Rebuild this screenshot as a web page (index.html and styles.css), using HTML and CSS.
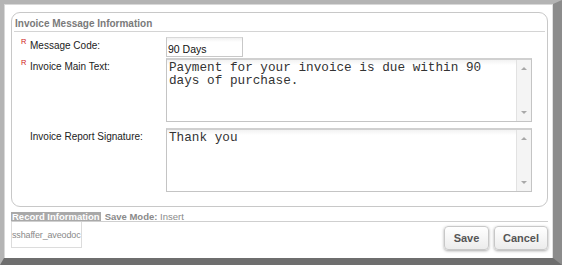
FILE: index.html
```html
<!DOCTYPE html>
<html>
<head>
<meta charset="utf-8">
<link rel="stylesheet" href="styles.css">
</head>
<body>
<div class="window">
  <div class="inner">
    <fieldset class="group">
      <div class="legend">Invoice Message Information</div>
      <div class="rows">
        <div class="row row-code">
          <div class="label"><span class="req">R</span>Message Code:</div>
          <div class="input">90 Days</div>
        </div>
        <div class="row">
          <div class="label"><span class="req">R</span>Invoice Main Text:</div>
          <div class="textarea">
            <div class="ta-text">Payment for your invoice is due within 90 days of purchase.</div>
            <div class="scroll"><span class="up"></span><span class="down"></span></div>
          </div>
        </div>
        <div class="row row-sig">
          <div class="label"><span class="req blank"></span>Invoice Report Signature:</div>
          <div class="textarea">
            <div class="ta-text">Thank you</div>
            <div class="scroll"><span class="up"></span><span class="down"></span></div>
          </div>
        </div>
      </div>
    </fieldset>
    <div class="record">
      <div class="record-bar">
        <span class="tab">Record Information</span>
        <span class="mode"><b>Save Mode:</b> Insert</span>
      </div>
      <div class="record-body">
        <div class="user">sshaffer_aveodoc</div>
        <div class="buttons">
          <button class="btn btn-save">Save</button>
          <button class="btn btn-cancel">Cancel</button>
        </div>
      </div>
    </div>
  </div>
</div>
</body>
</html>
```
FILE: styles.css
```css
* { box-sizing: border-box; }
html, body { margin: 0; padding: 0; background: #fff; }
body { width: 562px; height: 265px; overflow: hidden; font-family: "Liberation Sans", Arial, sans-serif; }
.window {
  width: 562px; height: 265px;
  border-top: 4px solid #b4b4b4;
  border-left: 4px solid #b4b4b4;
  border-right: 9px solid #8c8c8c;
  border-bottom: 7px solid #6e6e6e;
  background: #fff;
  position: relative;
}
.window::before {
  content: ""; position: absolute; left: 0; right: 0; top: 0; bottom: 0;
  border-left: 1px solid #d8d8d8; border-top: 1px solid #d8d8d8; border-right: 1px solid #e0e0e0;
  pointer-events: none;
}
.inner { padding: 8px 0 0 7px; width: 549px; }
.group {
  margin: 0; padding: 0;
  width: 537px; height: 195px;
  border: 1px solid #c8c8c8;
  border-radius: 9px;
  min-width: 0;
}
.legend {
  margin: 0 2px 0 2px;
  height: 19px;
  padding: 5px 0 0 1px;
  border-bottom: 1px solid #d4d4d4;
  font-size: 10px; font-weight: bold; color: #7a7a7a;
  line-height: 12px;
}
.rows { padding: 5px 0 0 9px; }
.row { display: flex; }
.row-code { height: 21px; }
.row-sig { margin-top: 6px; }
.label {
  width: 145px; font-size: 10px; color: #222; padding-top: 3px; line-height: 12px; display: flex;
}
.req { color: #d02020; font-size: 7.5px; line-height: 8px; width: 9px; display: inline-block; margin-top: -2px; }
.input {
  width: 77px; height: 20px;
  border: 1px solid #c8c8c8; border-top-color: #d8d8d8;
  font-size: 10.5px; color: #111; padding: 5px 0 0 1px; line-height: 12px;
  background: linear-gradient(#f0f0f0, #fff 4px);
}
.textarea {
  width: 366px; height: 64px; display: flex;
  border: 1px solid #c4c4c4; border-top: 2px solid #d0d0d0;
  background: linear-gradient(#f2f2f2, #fff 5px);
}
.ta-text {
  flex: 1; font-family: "Liberation Mono", "Courier New", monospace; font-size: 12.7px; line-height: 13px;
  color: #333; padding: 1px 0 0 2px;
}
.scroll {
  width: 15px; background: #f4f4f4; border-left: 1px solid #e2e2e2;
  display: flex; flex-direction: column; justify-content: space-between; align-items: center; padding: 7px 0 7px;
}
.up { width: 0; height: 0; border-left: 3px solid transparent; border-right: 3px solid transparent; border-bottom: 3px solid #a8a8a8; }
.down { width: 0; height: 0; border-left: 3px solid transparent; border-right: 3px solid transparent; border-top: 3px solid #a8a8a8; }
.record { margin-top: 5px; width: 537px; }
.record-bar { height: 10px; border-bottom: 1px solid #cfcfcf; display: flex; align-items: stretch; }
.tab { background: #a9a9a9; color: #fff; font-weight: bold; font-size: 9.5px; line-height: 10px; padding: 0 1px; }
.mode { color: #8a8a8a; font-size: 9.5px; line-height: 10px; padding-left: 4px; }
.record-body { display: flex; justify-content: space-between; }
.user {
  width: 71px; height: 26px; border: 1px solid #dcdcdc; border-top: none;
  font-size: 9px; color: #8a8a8a; padding-top: 7px; line-height: 12px; overflow: hidden; white-space: nowrap;
  letter-spacing: -0.15px;
}
.buttons { display: flex; gap: 5px; padding-top: 4px; }
.btn {
  height: 24px; border: 1px solid #c8c8c8; border-radius: 4px;
  background: linear-gradient(#ffffff, #ececec);
  box-shadow: 0 1px 3px rgba(0,0,0,0.35);
  font-family: "Liberation Sans", Arial, sans-serif; font-weight: bold; font-size: 11px; color: #555;
  padding: 0;
}
.btn-save { width: 45px; }
.btn-cancel { width: 54px; }
```
